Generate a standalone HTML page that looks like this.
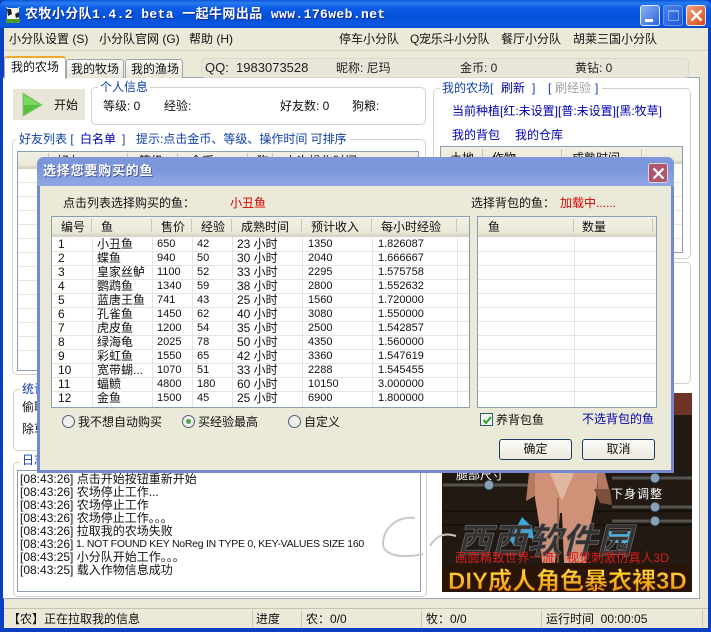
<!DOCTYPE html>
<html lang="zh"><head><meta charset="utf-8"><title>农牧小分队</title>
<style>
html,body{margin:0;padding:0;width:711px;height:632px;overflow:hidden;background:#0a3fc4}
body{position:relative;font:12px/14px "Liberation Sans","WenQuanYi Zen Hei","Noto Sans CJK SC",sans-serif;color:#111}
div,span{position:absolute;box-sizing:border-box}
.t{white-space:nowrap}
.b{color:#1040a8}.n{color:#0000b0}.r{color:#d80000}
.g{border:1px solid #d4d2c8;border-radius:5px;background:#fff}
.lbl{background:#fff;padding:0 2px;white-space:nowrap;color:#1040a8}
.h{background:linear-gradient(#f2f0e4,#ebe9d8 80%,#d6d3c2);height:17px;border-bottom:1px solid #d6d3c2}
.sep{width:1px;background:#c9c6b6;top:2px;height:13px}
.line{height:1px;background:#e6e5da}
.vl{width:1px;background:#e6e5da}
.btn{width:73px;height:21px;border:1px solid #1c3c60;border-radius:3px;background:linear-gradient(#fbfbf8,#ece9dc);text-align:center;line-height:19px}
.t[style*="left:157px"],.t[style*="left:197px"],.t[style*="left:308px"],.t[style*="left:378px"]{font-size:11px}
</style></head><body>

<!-- title bar -->
<div style="left:0;top:0;width:711px;height:28px;background:linear-gradient(#0a55d8 0,#2a7cf0 3px,#0a5ce6 8px,#0650d8 18px,#0a58e2 26px,#0a46c0);border-radius:7px 7px 0 0"></div>
<svg style="position:absolute;left:5px;top:6px" width="16" height="17" viewBox="0 0 16 17"><rect x="2" y="2" width="12" height="12" fill="#f4f4f0"/><path d="M2 3l4 0 1 5-4 2zM10 8l4-2 0 5-3 1z" fill="#222"/><rect x="1" y="13" width="14" height="4" fill="#4c9a30"/><path d="M1 1l3 2M15 1l-3 2" stroke="#ddd"/></svg>
<div class="t" style="left:25px;top:8px;color:#fff;font-size:13px;font-weight:bold;letter-spacing:.4px;text-shadow:1px 1px 0 #0a2a90;font-family:'Liberation Mono','WenQuanYi Zen Hei','Noto Sans CJK SC',monospace">农牧小分队1.4.2 beta 一起牛网出品 www.176web.net</div>
<div style="left:640px;top:5px;width:20px;height:21px;border:1px solid #dfe8fa;border-radius:3px;background:linear-gradient(135deg,#8db2f4,#2a62dc)"><div style="left:4px;top:13px;width:8px;height:3px;background:#fff"></div></div>
<div style="left:663px;top:5px;width:20px;height:21px;border:1px solid #7fa4ea;border-radius:3px;background:linear-gradient(135deg,#5b8cec,#1f58d8);opacity:.8"><div style="left:4px;top:4px;width:11px;height:11px;border:1px solid #9cbcf2;border-top-width:2px"></div></div>
<div style="left:686px;top:5px;width:20px;height:21px;border:1px solid #f2e8e0;border-radius:3px;background:linear-gradient(135deg,#f0a080,#d84a18)"><svg style="position:absolute;left:3px;top:3px" width="13" height="13"><path d="M1.5 1.5l10 10M11.5 1.5l-10 10" stroke="#fff" stroke-width="2.4"/></svg></div>

<!-- client -->
<div style="left:4px;top:28px;width:704px;height:600px;background:#ebe9d8"></div>

<!-- menu -->
<div class="t" style="left:9px;top:32px">小分队设置 (S)</div>
<div class="t" style="left:99px;top:32px">小分队官网 (G)</div>
<div class="t" style="left:189px;top:32px">帮助 (H)</div>
<div class="t" style="left:339px;top:32px">停车小分队</div>
<div class="t" style="left:410px;top:32px;letter-spacing:-.3px">Q宠乐斗小分队</div>
<div class="t" style="left:501px;top:32px">餐厅小分队</div>
<div class="t" style="left:573px;top:32px">胡莱三国小分队</div>
<div style="left:4px;top:50px;width:704px;height:1px;background:#d8d5c6"></div>

<!-- tabs -->
<div style="left:3px;top:77px;width:697px;height:522px;background:#fff;border:1px solid #9aa6b2;border-left:none"></div>
<div style="left:4px;top:56px;width:62px;height:23px;background:#fff;border:1px solid #b0b0a4;border-top:2px solid #f0a830;border-bottom:none;border-radius:3px 3px 0 0"></div>
<div class="t" style="left:11px;top:60px">我的农场</div>
<div style="left:66px;top:59px;width:58px;height:19px;background:linear-gradient(#fcfcfa,#e8e6da);border:1px solid #a0a6a8;border-bottom:none;border-radius:3px 3px 0 0"></div>
<div class="t" style="left:71px;top:62px">我的牧场</div>
<div style="left:125px;top:59px;width:58px;height:19px;background:linear-gradient(#fcfcfa,#e8e6da);border:1px solid #a0a6a8;border-bottom:none;border-radius:3px 3px 0 0"></div>
<div class="t" style="left:131px;top:62px">我的渔场</div>
<div style="left:201px;top:58px;width:488px;height:20px;border:1px solid #dcd9ca;border-radius:4px;background:#e8e6d9"></div>
<div class="t" style="left:205px;top:61px;font-size:13px;color:#222">QQ:&nbsp; 1983073528</div>
<div class="t" style="left:336px;top:61px;color:#222">昵称: 尼玛</div>
<div class="t" style="left:460px;top:61px;color:#222">金币: 0</div>
<div class="t" style="left:575px;top:61px;color:#222">黄钻: 0</div>

<!-- start button -->
<div style="left:13px;top:89px;width:72px;height:31px;background:#e8e6d8"></div>
<svg style="position:absolute;left:22px;top:92px" width="22" height="25"><path d="M1 1L20 13 1 24z" fill="#58c040" stroke="#8cc880"/><path d="M2 3L18 13 2 13z" fill="#7cd860"/></svg>
<div class="t" style="left:54px;top:98px">开始</div>

<!-- personal info -->
<div class="g" style="left:91px;top:87px;width:335px;height:38px"></div>
<div class="lbl" style="left:98px;top:80px">个人信息</div>
<div class="t" style="left:103px;top:99px">等级: 0</div>
<div class="t" style="left:164px;top:99px">经验:</div>
<div class="t" style="left:280px;top:99px">好友数: 0</div>
<div class="t" style="left:352px;top:99px">狗粮:</div>

<!-- friend list -->
<div class="g" style="left:12px;top:139px;width:414px;height:236px"></div>
<div class="lbl" style="left:17px;top:132px;width:333px;height:14px">好友列表 [</div>
<div class="t n" style="left:80px;top:132px">白名单</div>
<div class="t b" style="left:122px;top:132px">]</div>
<div class="t b" style="left:136px;top:132px">提示:点击金币、等级、操作时间 可排序</div>
<div style="left:17px;top:151px;width:402px;height:220px;background:#fff;border:1px solid #8c9cb4"></div>
<div class="h" style="left:18px;top:152px;width:400px"></div>
<div class="sep" style="left:48px;top:153px"></div><div class="sep" style="left:127px;top:153px"></div><div class="sep" style="left:177px;top:153px"></div><div class="sep" style="left:247px;top:153px"></div><div class="sep" style="left:272px;top:153px"></div>
<div class="t" style="left:57px;top:154px">好友</div><div class="t" style="left:139px;top:154px">等级</div><div class="t" style="left:190px;top:154px">金币</div><div class="t" style="left:257px;top:154px">狗</div><div class="t" style="left:285px;top:154px">上次操作时间</div>
<div class="line" style="left:18px;top:182px;width:20px"></div><div class="line" style="left:18px;top:196px;width:20px"></div><div class="line" style="left:18px;top:210px;width:20px"></div><div class="line" style="left:18px;top:224px;width:20px"></div><div class="line" style="left:18px;top:238px;width:20px"></div><div class="line" style="left:18px;top:252px;width:20px"></div><div class="line" style="left:18px;top:266px;width:20px"></div><div class="line" style="left:18px;top:280px;width:20px"></div><div class="line" style="left:18px;top:294px;width:20px"></div><div class="line" style="left:18px;top:308px;width:20px"></div><div class="line" style="left:18px;top:322px;width:20px"></div><div class="line" style="left:18px;top:336px;width:20px"></div><div class="line" style="left:18px;top:350px;width:20px"></div>

<!-- stats -->
<div class="g" style="left:13px;top:389px;width:413px;height:62px"></div>
<div class="lbl" style="left:20px;top:382px">统计</div>
<div class="t" style="left:22px;top:400px">偷取</div>
<div class="t" style="left:22px;top:422px">除草</div>

<!-- log -->
<div class="g" style="left:13px;top:462px;width:414px;height:135px"></div>
<div class="lbl" style="left:20px;top:453px">日志</div>
<div style="left:17px;top:470px;width:404px;height:122px;background:#fff;border:1px solid #8c9cb4"></div>
<div class="t" style="left:20px;top:472px">[08:43:26] 点击开始按钮重新开始</div>
<div class="t" style="left:20px;top:485px">[08:43:26] 农场停止工作...</div>
<div class="t" style="left:20px;top:498px">[08:43:26] 农场停止工作</div>
<div class="t" style="left:20px;top:511px">[08:43:26] 农场停止工作。。。</div>
<div class="t" style="left:20px;top:524px">[08:43:26] 拉取我的农场失败</div>
<div class="t" style="left:20px;top:537px">[08:43:26]</div>
<div class="t" style="left:76px;top:537px;font-size:10.5px;letter-spacing:-.27px">1. NOT FOUND KEY NoReg IN TYPE 0, KEY-VALUES SIZE 160</div>
<div class="t" style="left:20px;top:550px">[08:43:25] 小分队开始工作。。。</div>
<div class="t" style="left:20px;top:563px">[08:43:25] 载入作物信息成功</div>

<!-- right: my farm -->
<div class="g" style="left:433px;top:88px;width:258px;height:171px"></div>
<div class="lbl" style="left:440px;top:81px;width:162px;height:14px">我的农场[</div>
<div class="t n" style="left:501px;top:81px">刷新</div>
<div class="t b" style="left:532px;top:81px">]</div>
<div class="t b" style="left:548px;top:81px">[</div>
<div class="t" style="left:555px;top:81px;color:#a0a0a0">刷经验</div>
<div class="t b" style="left:595px;top:81px">]</div>
<div class="t n" style="left:452px;top:104px">当前种植[红:未设置][普:未设置][黑:牧草]</div>
<div class="t n" style="left:452px;top:128px">我的背包</div>
<div class="t n" style="left:515px;top:128px">我的仓库</div>
<div style="left:440px;top:146px;width:243px;height:107px;background:#fff;border:1px solid #8c9cb4"></div>
<div class="h" style="left:441px;top:147px;width:241px"></div>
<div class="sep" style="left:482px;top:149px"></div><div class="sep" style="left:561px;top:149px"></div><div class="sep" style="left:641px;top:149px"></div>
<div class="t" style="left:450px;top:151px">土地</div><div class="t" style="left:492px;top:151px">作物</div><div class="t" style="left:572px;top:151px">成熟时间</div>
<div class="line" style="left:674px;top:182px;width:8px"></div><div class="line" style="left:674px;top:196px;width:8px"></div><div class="line" style="left:674px;top:210px;width:8px"></div><div class="line" style="left:674px;top:224px;width:8px"></div><div class="line" style="left:674px;top:238px;width:8px"></div>
<div class="g" style="left:433px;top:262px;width:258px;height:122px"></div>

<!-- ad -->
<svg style="position:absolute;left:442px;top:393px" width="250" height="199" viewBox="0 0 250 199">
<defs><linearGradient id="gd" x1="0" y1="0" x2="0" y2="1"><stop offset="0" stop-color="#ffe23c"/><stop offset="1" stop-color="#e8860c"/></linearGradient></defs>
<rect width="250" height="199" fill="#221912"/>
<rect x="225" y="0" width="25" height="22" fill="#6e3226"/>
<path d="M0 118H250M0 132H250" stroke="#15100c" stroke-width="2"/>
<path d="M1 92H87M170 85H250M170 114H250M170 128H250" stroke="#56544e" stroke-width="3"/>
<circle cx="47" cy="92" r="5" fill="#8aa0b4" stroke="#233"/><circle cx="213" cy="85" r="5" fill="#8aa0b4" stroke="#233"/><circle cx="213" cy="114" r="5" fill="#8aa0b4" stroke="#233"/><circle cx="213" cy="128" r="5" fill="#8aa0b4" stroke="#233"/>
<text x="14" y="86" fill="#fff" font-size="12" font-family="'Liberation Sans','WenQuanYi Zen Hei',sans-serif">腿部尺寸</text>
<text x="169" y="105" fill="#fff" font-size="12" letter-spacing="1" font-family="'Liberation Sans','WenQuanYi Zen Hei',sans-serif">下身调整</text>
<!-- figure -->
<path d="M93 80H156L154 105 148 135 144 170H122L120 120H118L113 170H100L97 130 93 105z" fill="#cf9278"/>
<path d="M108 80L120 108 132 80z" fill="#e2b8a0"/>
<path d="M116 105V170" stroke="#8a5a48" stroke-width="1.5"/>
<path d="M87 80H93L93 103 84 108z M156 80H163L168 100 164 110 155 100z" fill="#b47a60"/>
<path d="M152 96L168 96 170 112 158 110z" fill="#7e4f3c"/>
<!-- arrows -->
<path d="M68 147L80 124 90 134 92 146 79 143 72 153z" fill="#3aa6dc"/>
<path d="M166 138H191L187 150H169z" fill="#42b4e4"/>
<text x="15" y="160" fill="#333" stroke="#777" stroke-width=".6" font-size="35" font-style="italic" font-weight="bold" font-family="'Liberation Sans','Noto Sans CJK SC',sans-serif">西西软件园</text>
<text x="13" y="169" fill="#d81c1c" font-size="12.4" font-family="'Liberation Sans','WenQuanYi Zen Hei',sans-serif">画面精致世界一流！视觉刺激仿真人3D</text>
<rect x="0" y="172" width="250" height="27" fill="#2a1408"/>
<text x="6" y="196" fill="url(#gd)" stroke="#5a2000" stroke-width=".5" font-size="24" font-weight="bold" font-family="'Liberation Sans','Noto Sans CJK SC',sans-serif">DIY成人角色暴衣裸3D</text>
</svg>
<svg style="position:absolute;left:375px;top:512px" width="90" height="60"><path d="M40 6C20 4 8 18 8 32c0 8 12 16 40 10M55 34c6-10 14-14 26-10" fill="none" stroke="#c8c8c8" stroke-width="2"/></svg>

<!-- status bar -->
<div style="left:4px;top:608px;width:704px;height:1px;background:#c6c3b2"></div>
<div style="left:4px;top:609px;width:704px;height:19px;background:#ebe9d8"></div>
<div class="t" style="left:8px;top:612px">【农】正在拉取我的信息</div>
<div style="left:252px;top:610px;width:1px;height:17px;background:#c9c6b6"></div>
<div class="t" style="left:256px;top:612px">进度</div>
<div style="left:301px;top:610px;width:1px;height:17px;background:#c9c6b6"></div>
<div class="t" style="left:306px;top:612px">农：0/0</div>
<div style="left:421px;top:610px;width:1px;height:17px;background:#c9c6b6"></div>
<div class="t" style="left:426px;top:612px">牧：0/0</div>
<div style="left:541px;top:610px;width:1px;height:17px;background:#c9c6b6"></div>
<div class="t" style="left:546px;top:612px">运行时间&nbsp; 00:00:05</div>
<div style="left:702px;top:610px;width:1px;height:17px;background:#c9c6b6"></div>

<!-- DIALOG -->
<div style="left:37px;top:157px;width:637px;height:316px;background:#7488d4;border-radius:7px 7px 0 0"></div>
<div style="left:37px;top:157px;width:637px;height:29px;background:linear-gradient(#7d97da,#7c96dc 40%,#90a8e4);border-radius:7px 7px 0 0"></div>
<div style="left:40px;top:186px;width:631px;height:284px;background:#ebe9d8"></div>
<div class="t" style="left:43px;top:164px;color:#fff;font-size:13px;font-weight:bold;letter-spacing:.8px;text-shadow:1px 1px 0 #4a5a9c">选择您要购买的鱼</div>
<div style="left:648px;top:163px;width:20px;height:20px;border:1px solid #d8d8e4;border-radius:3px;background:#b0566c"><svg style="position:absolute;left:3px;top:3px" width="13" height="13"><path d="M1.5 1.5l10 10M11.5 1.5l-10 10" stroke="#fff" stroke-width="2.2"/></svg></div>

<div class="t" style="left:63px;top:196px">点击列表选择购买的鱼：</div>
<div class="t r" style="left:230px;top:196px">小丑鱼</div>
<div class="t" style="left:471px;top:196px">选择背包的鱼：</div>
<div class="t r" style="left:560px;top:196px">加载中......</div>

<!-- left table -->
<div style="left:51px;top:216px;width:419px;height:192px;background:#fff;border:1px solid #8c9cb4"></div>
<div class="h" style="left:52px;top:217px;width:417px;height:20px"></div>
<div class="sep" style="left:91px;top:219px"></div><div class="sep" style="left:151px;top:219px"></div><div class="sep" style="left:191px;top:219px"></div><div class="sep" style="left:231px;top:219px"></div><div class="sep" style="left:301px;top:219px"></div><div class="sep" style="left:371px;top:219px"></div><div class="sep" style="left:456px;top:219px"></div>
<div class="t" style="left:61px;top:220px">编号</div><div class="t" style="left:101px;top:220px">鱼</div><div class="t" style="left:161px;top:220px">售价</div><div class="t" style="left:201px;top:220px">经验</div><div class="t" style="left:241px;top:220px">成熟时间</div><div class="t" style="left:311px;top:220px">预计收入</div><div class="t" style="left:381px;top:220px">每小时经验</div>
<div class="vl" style="left:92px;top:237px;height:170px"></div><div class="vl" style="left:152px;top:237px;height:170px"></div><div class="vl" style="left:192px;top:237px;height:170px"></div><div class="vl" style="left:232px;top:237px;height:170px"></div><div class="vl" style="left:302px;top:237px;height:170px"></div><div class="vl" style="left:372px;top:237px;height:170px"></div><div class="vl" style="left:457px;top:237px;height:170px"></div>
<div class="line" style="left:52px;top:251px;width:417px"></div><div class="line" style="left:52px;top:265px;width:417px"></div><div class="line" style="left:52px;top:279px;width:417px"></div><div class="line" style="left:52px;top:293px;width:417px"></div><div class="line" style="left:52px;top:307px;width:417px"></div><div class="line" style="left:52px;top:321px;width:417px"></div><div class="line" style="left:52px;top:335px;width:417px"></div><div class="line" style="left:52px;top:349px;width:417px"></div><div class="line" style="left:52px;top:363px;width:417px"></div><div class="line" style="left:52px;top:377px;width:417px"></div><div class="line" style="left:52px;top:391px;width:417px"></div>

<div class="t" style="left:58px;top:237px">1</div><div class="t" style="left:97px;top:237px">小丑鱼</div><div class="t" style="left:157px;top:237px">650</div><div class="t" style="left:197px;top:237px">42</div><div class="t" style="left:237px;top:237px">23 小时</div><div class="t" style="left:308px;top:237px">1350</div><div class="t" style="left:378px;top:237px">1.826087</div>
<div class="t" style="left:58px;top:251px">2</div><div class="t" style="left:97px;top:251px">蝶鱼</div><div class="t" style="left:157px;top:251px">940</div><div class="t" style="left:197px;top:251px">50</div><div class="t" style="left:237px;top:251px">30 小时</div><div class="t" style="left:308px;top:251px">2040</div><div class="t" style="left:378px;top:251px">1.666667</div>
<div class="t" style="left:58px;top:265px">3</div><div class="t" style="left:97px;top:265px">皇家丝鲈</div><div class="t" style="left:157px;top:265px">1100</div><div class="t" style="left:197px;top:265px">52</div><div class="t" style="left:237px;top:265px">33 小时</div><div class="t" style="left:308px;top:265px">2295</div><div class="t" style="left:378px;top:265px">1.575758</div>
<div class="t" style="left:58px;top:279px">4</div><div class="t" style="left:97px;top:279px">鹦鹉鱼</div><div class="t" style="left:157px;top:279px">1340</div><div class="t" style="left:197px;top:279px">59</div><div class="t" style="left:237px;top:279px">38 小时</div><div class="t" style="left:308px;top:279px">2800</div><div class="t" style="left:378px;top:279px">1.552632</div>
<div class="t" style="left:58px;top:293px">5</div><div class="t" style="left:97px;top:293px">蓝唐王鱼</div><div class="t" style="left:157px;top:293px">741</div><div class="t" style="left:197px;top:293px">43</div><div class="t" style="left:237px;top:293px">25 小时</div><div class="t" style="left:308px;top:293px">1560</div><div class="t" style="left:378px;top:293px">1.720000</div>
<div class="t" style="left:58px;top:307px">6</div><div class="t" style="left:97px;top:307px">孔雀鱼</div><div class="t" style="left:157px;top:307px">1450</div><div class="t" style="left:197px;top:307px">62</div><div class="t" style="left:237px;top:307px">40 小时</div><div class="t" style="left:308px;top:307px">3080</div><div class="t" style="left:378px;top:307px">1.550000</div>
<div class="t" style="left:58px;top:321px">7</div><div class="t" style="left:97px;top:321px">虎皮鱼</div><div class="t" style="left:157px;top:321px">1200</div><div class="t" style="left:197px;top:321px">54</div><div class="t" style="left:237px;top:321px">35 小时</div><div class="t" style="left:308px;top:321px">2500</div><div class="t" style="left:378px;top:321px">1.542857</div>
<div class="t" style="left:58px;top:335px">8</div><div class="t" style="left:97px;top:335px">绿海龟</div><div class="t" style="left:157px;top:335px">2025</div><div class="t" style="left:197px;top:335px">78</div><div class="t" style="left:237px;top:335px">50 小时</div><div class="t" style="left:308px;top:335px">4350</div><div class="t" style="left:378px;top:335px">1.560000</div>
<div class="t" style="left:58px;top:349px">9</div><div class="t" style="left:97px;top:349px">彩虹鱼</div><div class="t" style="left:157px;top:349px">1550</div><div class="t" style="left:197px;top:349px">65</div><div class="t" style="left:237px;top:349px">42 小时</div><div class="t" style="left:308px;top:349px">3360</div><div class="t" style="left:378px;top:349px">1.547619</div>
<div class="t" style="left:58px;top:363px">10</div><div class="t" style="left:97px;top:363px">宽带蝴...</div><div class="t" style="left:157px;top:363px">1070</div><div class="t" style="left:197px;top:363px">51</div><div class="t" style="left:237px;top:363px">33 小时</div><div class="t" style="left:308px;top:363px">2288</div><div class="t" style="left:378px;top:363px">1.545455</div>
<div class="t" style="left:58px;top:377px">11</div><div class="t" style="left:97px;top:377px">蝠鲼</div><div class="t" style="left:157px;top:377px">4800</div><div class="t" style="left:197px;top:377px">180</div><div class="t" style="left:237px;top:377px">60 小时</div><div class="t" style="left:308px;top:377px">10150</div><div class="t" style="left:378px;top:377px">3.000000</div>
<div class="t" style="left:58px;top:391px">12</div><div class="t" style="left:97px;top:391px">金鱼</div><div class="t" style="left:157px;top:391px">1500</div><div class="t" style="left:197px;top:391px">45</div><div class="t" style="left:237px;top:391px">25 小时</div><div class="t" style="left:308px;top:391px">6900</div><div class="t" style="left:378px;top:391px">1.800000</div>

<!-- right table -->
<div style="left:477px;top:216px;width:180px;height:192px;background:#fff;border:1px solid #8c9cb4"></div>
<div class="h" style="left:478px;top:217px;width:178px;height:20px"></div>
<div class="sep" style="left:573px;top:219px"></div><div class="sep" style="left:652px;top:219px"></div>
<div class="t" style="left:488px;top:220px">鱼</div><div class="t" style="left:582px;top:220px">数量</div>
<div class="vl" style="left:574px;top:237px;height:170px"></div>
<div class="line" style="left:478px;top:251px;width:178px"></div><div class="line" style="left:478px;top:265px;width:178px"></div><div class="line" style="left:478px;top:279px;width:178px"></div><div class="line" style="left:478px;top:293px;width:178px"></div><div class="line" style="left:478px;top:307px;width:178px"></div><div class="line" style="left:478px;top:321px;width:178px"></div><div class="line" style="left:478px;top:335px;width:178px"></div><div class="line" style="left:478px;top:349px;width:178px"></div><div class="line" style="left:478px;top:363px;width:178px"></div><div class="line" style="left:478px;top:377px;width:178px"></div><div class="line" style="left:478px;top:391px;width:178px"></div>

<!-- radios -->
<div style="left:62px;top:415px;width:13px;height:13px;border:1px solid #50607c;border-radius:50%;background:#f0f0ea"></div>
<div class="t" style="left:78px;top:415px">我不想自动购买</div>
<div style="left:182px;top:415px;width:13px;height:13px;border:1px solid #50607c;border-radius:50%;background:#f0f0ea"><div style="left:3px;top:3px;width:5px;height:5px;border-radius:50%;background:#4aa84a"></div></div>
<div class="t" style="left:198px;top:415px">买经验最高</div>
<div style="left:288px;top:415px;width:13px;height:13px;border:1px solid #50607c;border-radius:50%;background:#f0f0ea"></div>
<div class="t" style="left:304px;top:415px">自定义</div>

<!-- checkbox -->
<div style="left:480px;top:413px;width:13px;height:13px;border:1px solid #2c5a70;background:#f4f4ee"><svg style="position:absolute;left:1px;top:1px" width="10" height="10"><path d="M1.5 5l2.5 3 5-6" fill="none" stroke="#28a028" stroke-width="2"/></svg></div>
<div class="t" style="left:496px;top:413px">养背包鱼</div>
<div class="t n" style="left:582px;top:412px">不选背包的鱼</div>

<div class="btn" style="left:499px;top:439px">确定</div>
<div class="btn" style="left:582px;top:439px">取消</div>

</body></html>
